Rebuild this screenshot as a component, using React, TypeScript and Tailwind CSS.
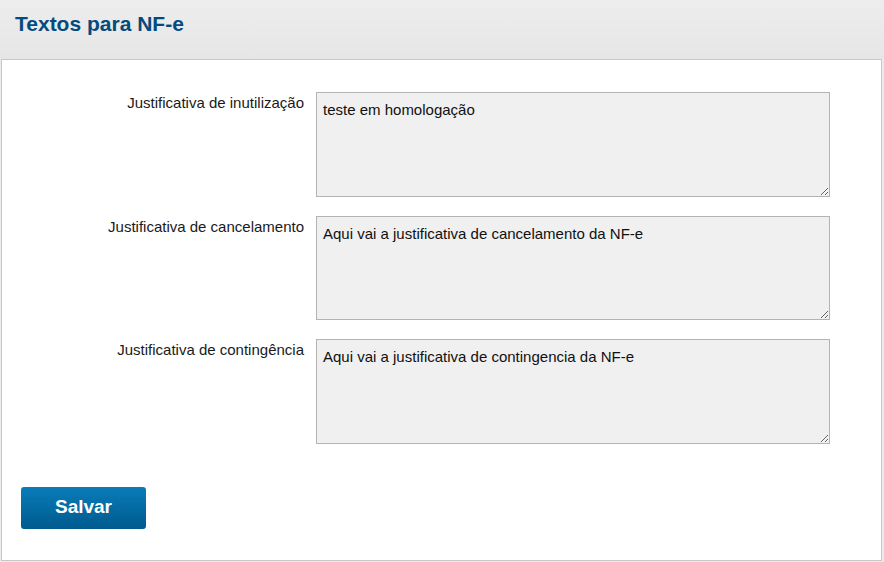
import React from "react";

const fields = [
  { label: "Justificativa de inutilização", value: "teste em homologação" },
  { label: "Justificativa de cancelamento", value: "Aqui vai a justificativa de cancelamento da NF-e" },
  { label: "Justificativa de contingência", value: "Aqui vai a justificativa de contingencia da NF-e" },
];

export default function App() {
  return (
    <div className="w-[884px] h-[562px] bg-[#ebebeb] font-['Liberation_Sans',Arial,sans-serif] overflow-hidden">
      <div className="h-[59px] px-[15px] pt-[11px] bg-gradient-to-b from-[#ededed] to-[#e6e6e6]">
        <h1 className="text-[21px] leading-[25px] font-bold text-[#034b7e]">Textos para NF-e</h1>
      </div>
      <div className="ml-px w-[881px] h-[502px] bg-white border border-[#c8c8c8] pt-[32px] px-[19px]">
        <div className="flex flex-col gap-[19px]">
          {fields.map((f) => (
            <div key={f.label} className="flex gap-[12px]">
              <label className="w-[283px] text-right text-[15px] leading-[18px] text-[#1a1a1a] pt-[2px]">
                {f.label}
              </label>
              <textarea
                defaultValue={f.value}
                className="w-[514px] h-[104.5px] bg-[#f0f0f0] border border-[#b3b3b3] px-[6px] pt-[8px] pb-[6px] text-[15px] leading-[18px] text-[#111] outline-none resize-y font-['Liberation_Sans',Arial,sans-serif]"
              />
            </div>
          ))}
        </div>
        <button className="mt-[43px] w-[125px] h-[42px] rounded-[3px] bg-gradient-to-b from-[#0a7cb9] to-[#005a8e] text-white text-[19px] font-bold">
          Salvar
        </button>
      </div>
    </div>
  );
}
